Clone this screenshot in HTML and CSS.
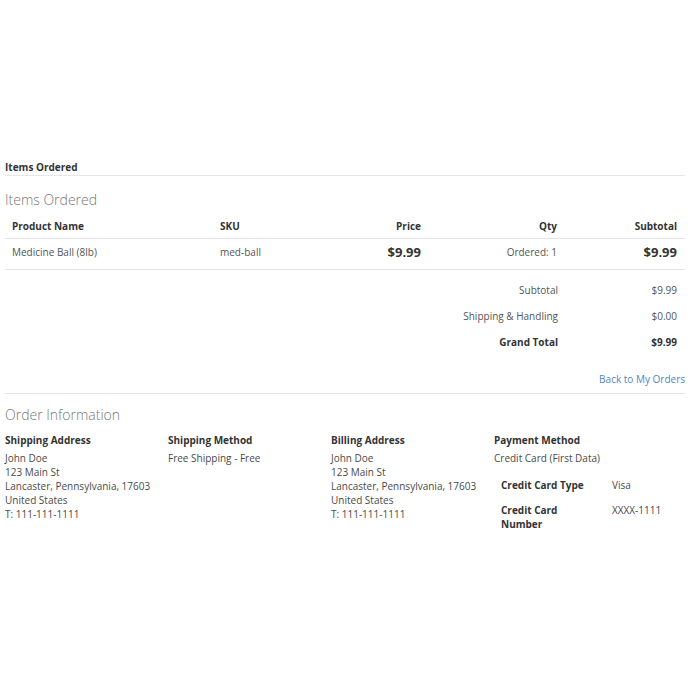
FILE: index.html
```html
<!DOCTYPE html>
<html lang="en">
<head>
<meta charset="utf-8">
<title>Order</title>
<link rel="stylesheet" href="styles.css">
</head>
<body>
<main class="page">
  <div class="tabs">Items Ordered</div>

  <h2 class="section-title">Items Ordered</h2>

  <table class="items">
    <colgroup>
      <col class="w-name">
      <col class="w-sku">
      <col class="w-price">
      <col class="w-qty">
      <col>
    </colgroup>
    <thead>
      <tr>
        <th>Product Name</th>
        <th>SKU</th>
        <th class="num">Price</th>
        <th class="num">Qty</th>
        <th class="num last">Subtotal</th>
      </tr>
    </thead>
    <tbody>
      <tr>
        <td>Medicine Ball (8lb)</td>
        <td>med-ball</td>
        <td class="num price">$9.99</td>
        <td class="num">Ordered: 1</td>
        <td class="num last price">$9.99</td>
      </tr>
    </tbody>
  </table>

  <table class="totals">
    <tr><td class="label">Subtotal</td><td class="amount">$9.99</td></tr>
    <tr><td class="label">Shipping &amp; Handling</td><td class="amount">$0.00</td></tr>
    <tr class="grand"><td class="label">Grand Total</td><td class="amount">$9.99</td></tr>
  </table>

  <div class="actions"><a href="#" class="back">Back to My Orders</a></div>

  <h2 class="section-title info-title">Order Information</h2>

  <div class="info">
    <div class="box">
      <strong class="box-title">Shipping Address</strong>
      <address>John Doe<br>123 Main St<br>Lancaster, Pennsylvania, 17603<br>United States<br>T: 111-111-1111</address>
    </div>
    <div class="box">
      <strong class="box-title">Shipping Method</strong>
      <p>Free Shipping - Free</p>
    </div>
    <div class="box">
      <strong class="box-title">Billing Address</strong>
      <address>John Doe<br>123 Main St<br>Lancaster, Pennsylvania, 17603<br>United States<br>T: 111-111-1111</address>
    </div>
    <div class="box">
      <strong class="box-title">Payment Method</strong>
      <p>Credit Card (First Data)</p>
      <table class="payment">
        <tr><th>Credit Card Type</th><td>Visa</td></tr>
        <tr><th>Credit Card Number</th><td>XXXX-1111</td></tr>
      </table>
    </div>
  </div>
</main>
</body>
</html>
```

FILE: styles.css
```css
html, body {
  margin: 0;
  background: #fff;
}

body {
  font-family: "Open Sans", "Liberation Sans", sans-serif;
  font-size: 10px;
  line-height: 14px;
  color: #4a4a4a;
}

.page {
  padding: 160px 15px 0 5px;
}

.tabs {
  font-weight: 700;
  color: #333;
  padding-bottom: 1px;
  border-bottom: 1px solid #e6e6e6;
}

.section-title {
  margin: 14px 0 0;
  font-size: 14px;
  line-height: 20px;
  font-weight: 300;
  color: #777;
}

.info-title {
  margin-top: 11px;
}

table {
  border-collapse: collapse;
  width: 100%;
}

/* ordered items */
.items {
  margin-top: 2px;
  table-layout: fixed;
}

.items .w-name { width: 208px; }
.items .w-sku { width: 100px; }
.items .w-price { width: 115px; }
.items .w-qty { width: 136px; }

.items th {
  font-weight: 700;
  color: #333;
  padding: 7px 7px 5px;
  border-bottom: 1px solid #e4e4e4;
  text-align: left;
}

.items td {
  padding: 4px 7px 8px;
  border-bottom: 1px solid #e4e4e4;
  line-height: 18px;
  vertical-align: middle;
  color: #555;
}

.items .num { text-align: right; }
.items .last { padding-right: 8px; }

.items td.price {
  font-size: 13px;
  font-weight: 700;
  color: #333;
}

/* order totals */
.totals {
  margin-top: 7px;
}

.totals td {
  padding: 6px 7px;
  text-align: right;
  color: #555;
}

.totals .amount {
  width: 105px;
  padding-right: 8px;
}

.totals .grand td {
  font-weight: 700;
  color: #333;
}

.actions {
  text-align: right;
  padding: 17px 0 7px;
  border-bottom: 1px solid #e4e4e4;
}

.back {
  color: #4f86c6;
  text-decoration: none;
}

/* order information boxes */
.info {
  margin-top: 6px;
  display: grid;
  grid-template-columns: repeat(4, 163px);
}

.box-title {
  display: block;
  font-weight: 700;
  color: #333;
  padding: 2px 0 4px;
}

.box address,
.box p {
  margin: 0;
  font-style: normal;
}

.payment {
  margin: 6px 0 0 7px;
  width: 156px;
  table-layout: fixed;
}

.payment th {
  text-align: left;
  font-weight: 700;
  color: #333;
  width: 90px;
  padding: 7px 21px 4px 0;
  vertical-align: top;
}

.payment td {
  padding: 7px 0 4px;
  vertical-align: top;
  white-space: nowrap;
}
```
